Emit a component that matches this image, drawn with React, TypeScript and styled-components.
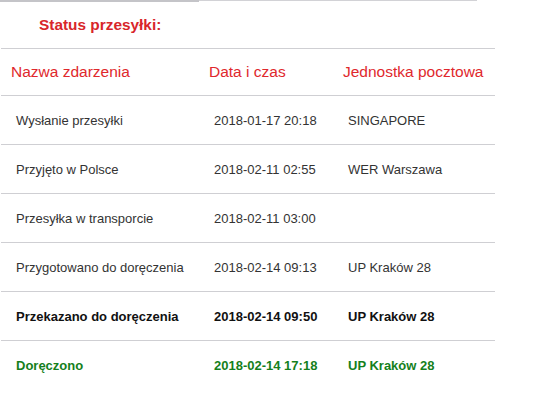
import React from "react";
import styled, { createGlobalStyle } from "styled-components";

const Global = createGlobalStyle`
  html, body { margin: 0; padding: 0; background: #fff; }
  body { font-family: Arial, "Liberation Sans", sans-serif; }
`;

const Page = styled.div`
  width: 537px;
  height: 394px;
  background: #fff;
`;

const TopRule = styled.div`
  display: flex;
  width: 477px;
  height: 2px;
`;

const RuleSeg = styled.div<{ $w: string; $dark?: boolean }>`
  flex: ${(p) => p.$w};
  height: ${(p) => (p.$dark ? "2px" : "1px")};
  background: ${(p) => (p.$dark ? "#c4c4c8" : "#d2d2d6")};
`;

const Title = styled.h3`
  margin: 0;
  height: 46px;
  box-sizing: border-box;
  padding: 14px 0 0 39px;
  font-size: 15.4px;
  font-weight: bold;
  color: #d8262a;
`;

const Table = styled.table`
  margin-left: 1px;
  width: 494px;
  border-collapse: collapse;
  border-top: 1px solid #cfcfd3;
`;

const HeadCell = styled.th<{ $w?: number }>`
  width: ${(p) => (p.$w ? `${p.$w}px` : "auto")};
  height: 47px;
  padding: 0 0 0 10px;
  text-align: left;
  font-weight: normal;
  font-size: 15.5px;
  color: #e0282c;
  border-bottom: 1px solid #cfcfd3;
  box-sizing: border-box;
  white-space: nowrap;
`;

type Tone = "normal" | "strong" | "done";

const Row = styled.tr<{ $tone: Tone }>`
  color: ${(p) =>
    p.$tone === "strong" ? "#111" : p.$tone === "done" ? "#15801c" : "#333"};
  font-weight: ${(p) => (p.$tone === "normal" ? "normal" : "bold")};
`;

const Cell = styled.td<{ $last?: boolean }>`
  height: 48px;
  padding: 0 0 0 15px;
  font-size: 13px;
  border-bottom: ${(p) => (p.$last ? "none" : "1px solid #cfcfd3")};
  white-space: nowrap;
`;

const rows: { name: string; date: string; unit: string; tone: Tone }[] = [
  { name: "Wysłanie przesyłki", date: "2018-01-17 20:18", unit: "SINGAPORE", tone: "normal" },
  { name: "Przyjęto w Polsce", date: "2018-02-11 02:55", unit: "WER Warszawa", tone: "normal" },
  { name: "Przesyłka w transporcie", date: "2018-02-11 03:00", unit: "", tone: "normal" },
  { name: "Przygotowano do doręczenia", date: "2018-02-14 09:13", unit: "UP Kraków 28", tone: "normal" },
  { name: "Przekazano do doręczenia", date: "2018-02-14 09:50", unit: "UP Kraków 28", tone: "strong" },
  { name: "Doręczono", date: "2018-02-14 17:18", unit: "UP Kraków 28", tone: "done" },
];

export default function App() {
  return (
    <Page>
      <Global />
      <TopRule>
        <RuleSeg $w="0 0 199px" $dark />
        <RuleSeg $w="1 1 auto" />
      </TopRule>
      <Title>Status przesyłki:</Title>
      <Table>
        <thead>
          <tr>
            <HeadCell $w={198}>Nazwa zdarzenia</HeadCell>
            <HeadCell $w={134}>Data i czas</HeadCell>
            <HeadCell>Jednostka pocztowa</HeadCell>
          </tr>
        </thead>
        <tbody>
          {rows.map((r, i) => {
            const last = i === rows.length - 1;
            return (
              <Row key={i} $tone={r.tone}>
                <Cell $last={last}>{r.name}</Cell>
                <Cell $last={last}>{r.date}</Cell>
                <Cell $last={last}>{r.unit}</Cell>
              </Row>
            );
          })}
        </tbody>
      </Table>
    </Page>
  );
}
